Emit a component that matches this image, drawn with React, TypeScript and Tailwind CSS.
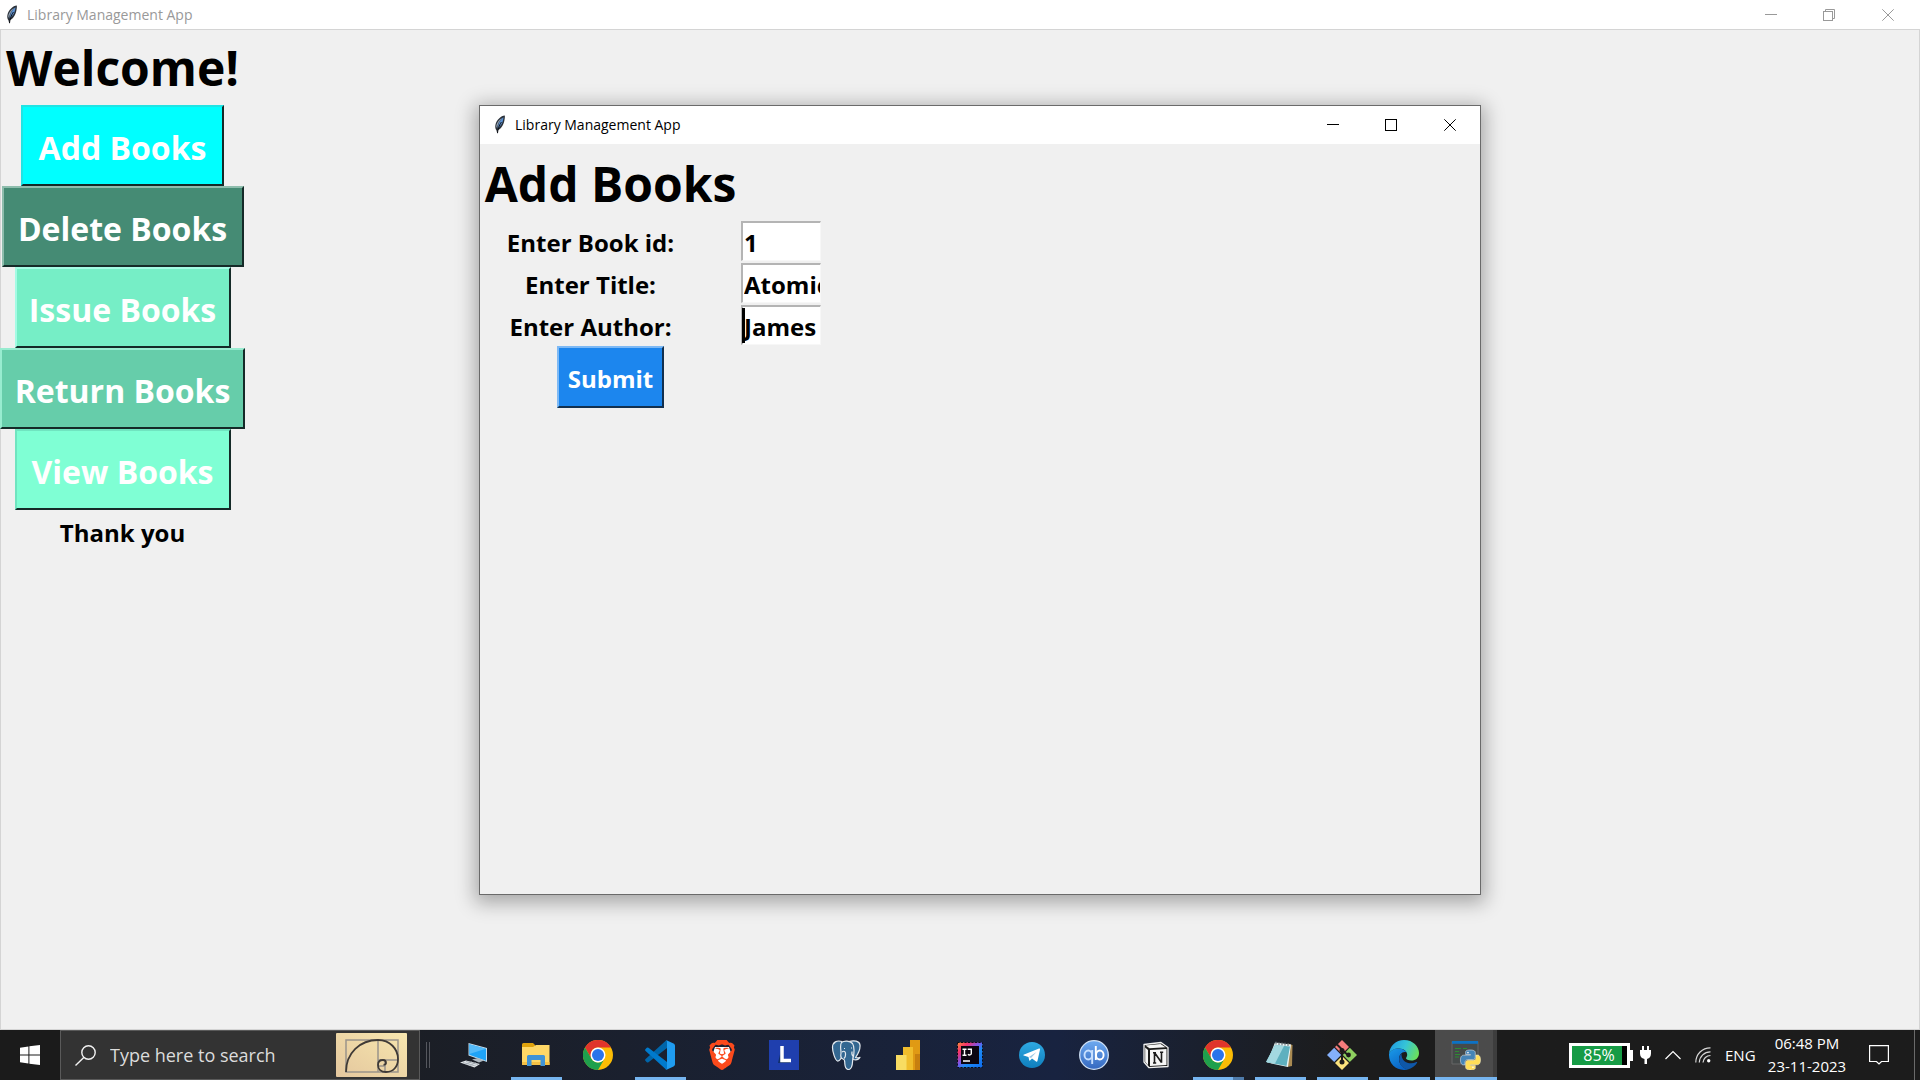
import React from "react";
import { SiBrave } from "react-icons/si";

const PY =
  "M14.25.18l.9.2.73.26.59.3.45.32.34.34.25.34.16.33.1.3.04.26.02.2-.01.13V8.5l-.05.63-.13.55-.21.46-.26.38-.3.31-.33.25-.35.19-.35.14-.33.1-.3.07-.26.04-.21.02H8.77l-.69.05-.59.14-.5.22-.41.27-.33.32-.27.35-.2.36-.15.37-.1.35-.07.32-.04.27-.02.21v3.06H3.17l-.21-.03-.28-.07-.32-.12-.35-.18-.36-.26-.36-.36-.35-.46-.32-.59-.28-.73-.21-.88-.14-1.05-.05-1.23.06-1.22.16-1.04.24-.87.32-.71.36-.57.4-.44.42-.33.42-.24.4-.16.36-.1.32-.05.24-.01h.16l.06.01h8.16v-.83H6.18l-.01-2.75-.02-.37.05-.34.11-.31.17-.28.25-.26.31-.23.38-.2.44-.18.51-.15.58-.12.64-.1.71-.06.77-.04.84-.02 1.27.05z";

function Feather() {
  return (
    <svg width="12" height="20" viewBox="0 0 12 20" className="shrink-0">
      <path d="M10.800.6C7 .8 2.500 5 1.400 10c-.4 2 0 4 1 5.200l1 3.800.7-4C7 14 9.500 10 10.400 5.500 10.800 3.500 11 2 10.800.6z" fill="#2a3038" />
      <path d="M9.500 2.200C6.500 4 4.300 8 3.600 13.400 6.600 11.500 9.300 7 9.500 2.200z" fill="#5a8fd0" />
      <path d="M8 3.200C5 4.500 2.600 8 2.200 11.500L3 13C3.600 9 5.500 5.500 8 3.200z" fill="#93a3b5" />
      <path d="M7.500 7C6 9 4.200 12 3.500 18" stroke="#0b0d12" fill="none" />
    </svg>
  );
}

const MinIcon = () => (
  <svg width="12" height="12" viewBox="0 0 12 12" stroke="currentColor"><path d="M0 5.500H12" /></svg>
);
const MaxIcon = () => (
  <svg width="12" height="12" viewBox="0 0 12 12" fill="none" stroke="currentColor"><rect x=".5" y=".5" width="11" height="11" /></svg>
);
const RestoreIcon = () => (
  <svg width="12" height="12" viewBox="0 0 12 12" fill="none" stroke="currentColor">
    <rect x=".5" y="2.500" width="9" height="9" />
    <path d="M2.500 2.500V.5H11.500V9.500H9.500" />
  </svg>
);
const CloseIcon = () => (
  <svg width="12" height="12" viewBox="0 0 12 12" fill="none" stroke="currentColor"><path d="M.3.3 11.700 11.700M11.700.3.3 11.700" /></svg>
);

function Controls({ restore = false }: { restore?: boolean }) {
  return (
    <div className="ml-auto flex self-stretch">
      <button aria-label="Minimize" className="grid w-[58px] place-items-center"><MinIcon /></button>
      <button aria-label="Maximize" className="grid w-[58px] place-items-center">{restore ? <RestoreIcon /> : <MaxIcon />}</button>
      <button aria-label="Close" className="grid w-[60px] place-items-center"><CloseIcon /></button>
    </div>
  );
}

const raised = "border-t-2 border-l-2 border-r-2 border-b-2 font-bold text-white";

const mainButtons = [
  { label: "Add Books", look: "w-[203px] bg-[#00ffff] border-t-[#20e4e4] border-l-[#20e4e4]" },
  { label: "Delete Books", look: "w-[242px] bg-[#458b74] border-t-[#8ebdad] border-l-[#8ebdad]" },
  { label: "Issue Books", look: "w-[216px] bg-[#76eec6] border-t-[#a4fbe4] border-l-[#a4fbe4]" },
  { label: "Return Books", look: "w-[245px] bg-[#66cdaa] border-t-[#98ecd0] border-l-[#98ecd0]" },
  { label: "View Books", look: "w-[216px] bg-[#7fffd4] border-t-[#70e4c0] border-l-[#70e4c0]" },
];

function Field({ id, label, value, caret = false }: { id: string; label: string; value: string; caret?: boolean }) {
  return (
    <div className="flex h-[42px] items-center">
      <label htmlFor={id} className="w-[261px] pt-1 pr-10 text-center text-[24px] leading-[34px] font-bold">{label}</label>
      <div className="relative w-20">
        <input
          id={id}
          defaultValue={value}
          className="block h-10 w-full border-t-2 border-r border-b border-l-2 border-t-[#b4b4b4] border-r-[#f7f7f7] border-b-[#f7f7f7] border-l-[#b4b4b4] bg-white pt-[2px] pl-px text-[24px] font-bold outline-none"
        />
        {caret && <span className="absolute top-[3px] left-px h-[35px] w-[3px] bg-black" />}
      </div>
    </div>
  );
}

function Chrome() {
  return (
    <svg width="30" height="30" viewBox="0 0 30 30">
      <circle cx="15" cy="15" r="15" fill="#fbbc05" />
      <path d="M2 7.500A15 15 0 0 1 28 7.500H15A7.500 7.500 0 0 0 8.500 11.250L8.500 18.750z" fill="#e0352b" />
      <path d="M2 7.500A15 15 0 0 0 15 30L21.500 18.750A7.500 7.500 0 0 1 8.500 18.750z" fill="#1fa04d" />
      <circle cx="15" cy="15" r="7.500" fill="#fff" />
      <circle cx="15" cy="15" r="6" fill="#2a74ea" />
    </svg>
  );
}
function Computer() {
  return (
    <svg width="30" height="30" viewBox="0 0 30 30">
      <path d="M9.500 3 28 8v14L9.500 15.500z" fill="#c8dbe8" />
      <path d="M10.300 4.200 27 8.700v12L10.300 14.800z" fill="#1fa3f6" />
      <path d="M10.300 4.200 27 8.700 10.300 14z" fill="#55baf8" />
      <path d="M13 19.500l6-1.500 6 2.500-5 2z" fill="#aeb8bf" />
      <path d="M1 22.500 7 20.500 21 24 15.500 27.500z" fill="#e3e7ea" />
      <path d="M4 22.500l13 3.700M7 21.500l12 3M7 24.500l6-3M11 25.500l6-3" stroke="#98a1a7" strokeWidth=".7" />
    </svg>
  );
}
function Folder() {
  return (
    <svg width="30" height="30" viewBox="0 0 30 30">
      <path d="M1 4.500a1.500 1.500 0 0 1 1.500-1.500H12l2 2V8H1z" fill="#e0a30c" />
      <path d="M1 7h11l3-2h13.500v20H1z" fill="#ffd866" />
      <path d="M1 22h27.500v3H1z" fill="#f4c045" />
      <path d="M6 26V16.500a1.500 1.500 0 0 1 1.500-1.500h15a1.500 1.500 0 0 1 1.500 1.500V26h-4.500v-6h-9v6z" fill="#3f93d6" />
    </svg>
  );
}
function Code() {
  return (
    <svg width="30" height="30" viewBox="0 0 30 30">
      <path d="M22 8 3.500 22.200a1.300 1.300 0 0 1-1.700 0L.6 21a1.300 1.300 0 0 1 0-1.900L21 .6 22 1z" fill="#0065a9" />
      <path d="M22 22 3.500 7.800a1.300 1.300 0 0 0-1.700 0L.6 9a1.300 1.300 0 0 0 0 1.900L21 29.400l1-.4z" fill="#007acc" />
      <path d="M21.500 29.700c-.7.300-1.300.2-1.800-.3.700.6 2.300.1 2.300-1.300V1.900c0-1.400-1.600-1.900-2.300-1.300.5-.5 1.100-.6 1.800-.3l7 3.300c.9.400 1.500 1.200 1.500 2.200v18.400c0 1-.6 1.800-1.500 2.200z" fill="#1f9cf0" />
    </svg>
  );
}
function Brave() {
  return (
    <div className="relative grid size-[30px] place-items-center">
      <svg width="20" height="22" viewBox="0 0 20 22" className="absolute"><path d="M3 3h14l2 6-3 8-6 5-6-5-3-8z" fill="#fff" /></svg>
      <SiBrave size={30} color="#fb4a1c" className="relative" />
    </div>
  );
}
function LSquare() {
  return (
    <div className="grid size-[30px] place-items-center bg-[#1f3fae]">
      <svg width="30" height="30" viewBox="0 0 30 30">
        <path d="M9 23l3-13v9h9v4z" fill="#12306b" />
        <path d="M13 6v14.500h9" stroke="#fff" strokeWidth="3.500" fill="none" />
      </svg>
    </div>
  );
}
function Postgres() {
  return (
    <svg width="30" height="30" viewBox="0 0 30 30" fill="#336791" stroke="#e4e9ee" strokeWidth="1.200" strokeLinejoin="round">
      <path d="M11 1.500C6 0 1.500 2 1.500 7.500c0 4 2.500 12.500 5 13.500 1.600.5 3-2 4-3.200z" />
      <path d="M18 1.500c5-1.500 10.500-.5 11 3.500.3 3.500-2 9-4.500 12.500 1.500.5 3.500.3 4.500-.2-1 2-4 3-7 2.200z" />
      <path d="M10.500 2.500C13 .5 19 .5 21.500 3.500c2.500 3.500 1.500 9 1 13-.8.800-.7 2-.9 4.500-.2 4.500-1.100 8.500-4.100 8.500s-3.500-3-3.700-6c-.1-3 .2-4-1.800-4.500-2.500-.7-2.500-3-2-5.500.3-3-1.500-8 .5-11z" />
      <path d="M11 12c2-1.500 3.500-.5 3.500 1.500 0 2.500.5 3-1.500 5M22.500 16.500c-1.500-1-2-2.500-1.500-5" fill="none" />
      <path d="M13 8.500h1M20 8h1" />
    </svg>
  );
}
function PowerBi() {
  return (
    <svg width="30" height="30" viewBox="0 0 30 30">
      <path d="M17 0h10v30H17z" fill="#e09a14" />
      <path d="M22 14h5v16h-5z" fill="#c77f0f" />
      <path d="M10 7h10v23H10z" fill="#f0bd2c" />
      <path d="M3 15h10.500v15H3z" fill="#f8dc62" />
    </svg>
  );
}
function IntelliJ() {
  return (
    <svg width="30" height="30" viewBox="0 0 30 30">
      <defs>
        <linearGradient id="ij" x1="0" y1="0" x2="1" y2="1">
          <stop offset="0" stopColor="#fc8f3c" /><stop offset=".22" stopColor="#f8316a" /><stop offset=".45" stopColor="#7a55e8" /><stop offset=".6" stopColor="#1d8cf5" /><stop offset="1" stopColor="#0f6cf0" />
        </linearGradient>
      </defs>
      <rect x="2.500" y="2.500" width="25" height="25" fill="url(#ij)" stroke="#0c0d14" strokeDasharray="2 1.500" />
      <rect x="6" y="6" width="18" height="18" fill="#0b0510" />
      <path d="M7.500 9.200h4M9.500 9.200v6M7.500 15.200h4M12.700 9.200h3.600v4.300c0 1.500-2.300 2-3.300.8M8 21h7" stroke="#fff" strokeWidth="1.400" fill="none" />
    </svg>
  );
}
function Telegram() {
  return (
    <svg width="30" height="30" viewBox="0 0 30 30">
      <defs><linearGradient id="tg" x1="0" y1="0" x2="0" y2="1"><stop offset="0" stopColor="#2fa9e2" /><stop offset="1" stopColor="#0f7fbd" /></linearGradient></defs>
      <circle cx="15" cy="15" r="13" fill="url(#tg)" />
      <path d="M6.500 14.800 22 8.500c.7-.3 1.200.1 1 1l-2.500 11.300c-.2.900-.7 1.100-1.400.7L15 18.500l-2 2c-.3.300-.7.200-.8-.3l-.7-3.200-4.900-1.500c-.4-.2-.4-.5-.1-.7z" fill="#fff" />
      <path d="M12 17l7.500-5-5.500 6z" fill="#9cc9e4" />
    </svg>
  );
}
function QBit() {
  return (
    <svg width="30" height="30" viewBox="0 0 30 30">
      <defs><linearGradient id="qb" x1="0" y1="0" x2="0" y2="1"><stop offset="0" stopColor="#6eaaf0" /><stop offset="1" stopColor="#3468c0" /></linearGradient></defs>
      <circle cx="15" cy="15" r="14.300" fill="url(#qb)" stroke="#cfe0f5" strokeWidth="1.300" />
      <g fill="none" strokeWidth="1.900">
        <g stroke="#c8e0ff"><ellipse cx="9.300" cy="15" rx="3.800" ry="4.500" /><path d="M13.200 10v14" /></g>
        <g stroke="#fff"><ellipse cx="20.800" cy="15" rx="3.800" ry="4.500" /><path d="M16.800 6v14" /></g>
      </g>
    </svg>
  );
}
function Notion() {
  return (
    <svg width="30" height="30" viewBox="0 0 30 30">
      <path d="M3 4.500 20 2.500 27 7.500V26.500L8 27.700 3 22z" fill="#1b1b1b" stroke="#f0f0f0" strokeWidth="1.300" strokeLinejoin="round" />
      <path d="M4.500 5.500 19.500 4 24.500 7.200 8.500 8.200z" fill="#f6f6f6" />
      <path d="M4.200 7.500 7 10v15.200L4.200 21.800z" fill="#f6f6f6" />
      <path d="M9 10 25.500 9v16L9 26z" fill="#f6f6f6" />
      <path d="M12 12.700h3M13.500 12.500v10.500M12 23h3.200M13.500 12.500 20.500 22.500M20.500 12.300v10.500M19 12.300h3.200" stroke="#1b1b1b" strokeWidth="1.600" fill="none" />
    </svg>
  );
}
function Notepad() {
  return (
    <svg width="30" height="30" viewBox="0 0 30 30">
      <path d="M23 3.500 27.500 5 27 26l-5 1z" fill="#a98a52" />
      <path d="M10 2.500 26 4.500 23 27 2 22.500z" fill="#e9f4f5" />
      <path d="M10 5 25 6.500 21.500 26 1 22z" fill="#5eb0bf" />
      <path d="M10 5 19 6 10 23.500 1 22z" fill="#a3d8e0" />
      <path d="M11 1.500v3M14 2v3M17 2.300v3M20 2.600v3M23 3v3" stroke="#596268" />
    </svg>
  );
}
function Git() {
  return (
    <svg width="30" height="30" viewBox="0 0 30 30">
      <path d="M15 0 22 7 15 14 8 7z" fill="#f57c7c" />
      <path d="M7.200 7.800 14.200 15 7.200 22 0 15z" fill="#84b0fb" />
      <path d="M22.800 7.800 30 15 22.800 22 15.800 15z" fill="#8fd060" />
      <path d="M15 16 22 23 15 30 8 23z" fill="#fbe27c" />
      <path d="M10 4.500 15 9.500V22M15 10l6.500 5.500" stroke="#1d1b1a" strokeWidth="2" fill="none" />
      <circle cx="15" cy="10.500" r="2.500" fill="#1d1b1a" /><circle cx="15" cy="22" r="2.500" fill="#1d1b1a" /><circle cx="21.500" cy="15" r="2.400" fill="#1d1b1a" />
    </svg>
  );
}
function Edge() {
  return (
    <svg width="30" height="30" viewBox="0 0 30 30">
      <defs>
        <linearGradient id="e1" x1="0" y1=".3" x2="1" y2=".6"><stop offset="0" stopColor="#1f9ce4" /><stop offset=".5" stopColor="#36c5d6" /><stop offset="1" stopColor="#6be05a" /></linearGradient>
        <linearGradient id="e2" x1="0" y1="0" x2=".6" y2="1"><stop offset="0" stopColor="#1a9be8" /><stop offset="1" stopColor="#0a62c4" /></linearGradient>
      </defs>
      <path d="M0 14C.5 6 7 0 15 0c9 0 15 6.500 15 13 0 5-3.500 7.500-7.500 7.500-3.500 0-5.500-1.200-5.500-2.200 0-.8 1.200-1.300 1.200-3.500 0-3.500-3.700-6.300-8.200-6.300C5.500 8.500 1.500 10.500 0 14z" fill="url(#e1)" />
      <path d="M0 14c1.500-3.700 5.500-5.700 10-5.500 3.500 0 6.500 1.700 7.700 4-3.700-1.700-7.700 1.500-7.700 6.500 0 6 5 10 9.500 10.300C9 32 0 25 0 15z" fill="url(#e2)" />
      <path d="M12.500 13.500C9 16.500 9.500 23 13.500 27c2 2 4.500 2.500 6 2.300 3.500-1 6.800-3.500 8.600-6.500.3-.6-.2-.9-.7-.7-6.400 3-15.400.4-14.900-8.600z" fill="#0f57a8" />
    </svg>
  );
}
function PythonApp() {
  return (
    <svg width="30" height="30" viewBox="0 0 30 30">
      <path d="M1 1.500h26V24H1z" fill="#454a4a" stroke="#666" />
      <path d="M1 1h26v2.800H1z" fill="#0d72c4" />
      <path d="M4 8.500h6M4 11.500h4M4 14.500h5M4 17h4M12 8.500h4" stroke="#2f8a33" />
      <g transform="translate(9.500 10) scale(.83)">
        <path d={PY} fill="#4584b6" stroke="#dfe8ee" strokeWidth=".7" />
        <path d={PY} transform="rotate(180 12 12)" fill="#ffde57" stroke="#f3ecc8" strokeWidth=".7" />
        <circle cx="9" cy="3.200" r="1" fill="#fff" /><circle cx="15" cy="20.800" r="1" fill="#fff" />
      </g>
    </svg>
  );
}

const apps: { name: string; icon: React.ReactNode; open?: boolean; many?: boolean; active?: boolean }[] = [
  { name: "This PC", icon: <Computer /> },
  { name: "File Explorer", icon: <Folder />, open: true },
  { name: "Chrome", icon: <Chrome /> },
  { name: "Visual Studio Code", icon: <Code />, open: true },
  { name: "Brave", icon: <Brave /> },
  { name: "L", icon: <LSquare /> },
  { name: "PostgreSQL", icon: <Postgres /> },
  { name: "Power BI", icon: <PowerBi /> },
  { name: "IntelliJ IDEA", icon: <IntelliJ /> },
  { name: "Telegram", icon: <Telegram /> },
  { name: "qBittorrent", icon: <QBit /> },
  { name: "Notion", icon: <Notion /> },
  { name: "Chrome window", icon: <Chrome />, open: true, many: true },
  { name: "Notepad", icon: <Notepad />, open: true },
  { name: "Git Bash", icon: <Git />, open: true },
  { name: "Edge", icon: <Edge />, open: true },
  { name: "Python", icon: <PythonApp />, active: true },
];

function Taskbar() {
  return (
    <footer className="flex h-[50px] shrink-0 bg-linear-to-r from-[#1c1c1c] from-10% via-[#182340] via-55% to-[#1c1c1c] to-70% text-white">
      <button aria-label="Start" className="grid w-[60px] shrink-0 place-items-center bg-[#1b1b1b]">
        <svg width="20" height="20" viewBox="0 0 20 20" fill="#fff">
          <path d="M0 2.700 8.400 1.500V9.500H0zM9.400 1.300 20 0V9.500H9.400zM0 10.500H8.400V18.500L0 17.300zM9.400 10.500H20V20L9.400 18.700z" />
        </svg>
      </button>
      <div className="flex w-[360px] shrink-0 items-center border border-[#5a5a5a] bg-[#333333] pr-3 pl-[14px]">
        <svg width="21" height="21" viewBox="0 0 21 21" fill="none" stroke="#f2f2f2" strokeWidth="1.400" className="shrink-0">
          <circle cx="13.500" cy="7.500" r="6.700" /><path d="M8.800 12.400.5 20.500" />
        </svg>
        <input aria-label="Search" placeholder="Type here to search" className="ml-[14px] w-0 grow bg-transparent text-[18px] outline-none placeholder:text-[#dcdcdc]" />
        <svg width="71" height="44" viewBox="0 0 71 44" className="shrink-0">
          <defs><linearGradient id="gold" x1="1" y1="0" x2="0" y2="1"><stop offset="0" stopColor="#f7e6ae" /><stop offset="1" stopColor="#e4c79e" /></linearGradient></defs>
          <rect width="71" height="44" rx="1" fill="url(#gold)" />
          <path d="M10 7H62V39H10zM42 7V39M42 27H62M49 27V39M42 33H49" fill="none" stroke="#9b948b" strokeWidth="1.500" />
          <path d="M10 39C10 20 24 7 42 7c12 0 20 9 20 19 0 8-5 13-12 13-5 0-8-3-8-7 0-3 2-5 5-5 2 0 3 1 3 3 0 1-1 2-2.500 1.500" fill="none" stroke="#3f3a36" strokeWidth="1.800" />
        </svg>
      </div>
      <div className="flex w-[23px] shrink-0 items-center gap-[2px] pl-[6px]">
        <span className="h-[26px] w-px bg-[#55575e]" />
        <span className="h-[26px] w-px bg-[#55575e]" />
      </div>
      <nav className="flex">
        {apps.map((a) => (
          <button
            key={a.name}
            aria-label={a.name}
            className={a.active ? "flex w-[62px] flex-col items-center bg-linear-to-r from-[#4b4b4b] from-93% to-[#3d3d3d] to-93%" : "flex w-[62px] flex-col items-center"}
          >
            <span className="grid h-[47px] place-items-center pt-[3px]">{a.icon}</span>
            {a.many && <span className="h-[3px] w-[51px] border-r-[11px] border-[#4f7cab] bg-[#76b5f0]" />}
            {a.open && !a.many && <span className="h-[3px] w-[51px] bg-[#76b5f0]" />}
            {a.active && <span className="h-[3px] w-full bg-[#76b5f0]" />}
          </button>
        ))}
      </nav>
      <div className="ml-auto flex items-center text-[15px] whitespace-nowrap">
        <div className="flex items-center">
          <div className="flex h-[25px] w-[61px] border-[3px] border-white bg-black">
            <span className="grid h-full w-[50px] place-items-center bg-[#169b45] pl-1 text-[16px] leading-none">85%</span>
          </div>
          <span className="h-[11px] w-[3px] bg-white" />
        </div>
        <svg width="11" height="18" viewBox="0 0 11 18" fill="#fff" className="ml-[7px]">
          <path d="M2 0h2v4h3V0h2v4h2v3.500c0 3-1.500 5-4 5.500V18H4.500v-5C1.500 12.500 0 10.500 0 7.500V4h2z" />
        </svg>
        <svg width="16" height="10" viewBox="0 0 16 10" fill="none" stroke="#fff" strokeWidth="1.200" className="ml-[14px]"><path d="M.5 9 8 1.500 15.500 9" /></svg>
        <svg width="16" height="16" viewBox="0 0 16 16" fill="none" stroke="#d8d8d8" strokeWidth="1.200" className="ml-[14px]">
          <path d="M.8 15.500A14.500 14.500 0 0 1 15.500.8M4.300 15.500A11 11 0 0 1 15.500 4.800M8 15.500A7.500 7.500 0 0 1 15.500 8.500" />
          <circle cx="13.700" cy="13.700" r="1.700" fill="#fff" stroke="none" />
        </svg>
        <span className="ml-[14px] w-[30px]">ENG</span>
        <div className="ml-3 w-[80px] text-center leading-[23px]">
          <div>06:48 PM</div>
          <div>23-11-2023</div>
        </div>
        <button aria-label="Notifications" className="ml-[22px]">
          <svg width="20" height="20" viewBox="0 0 20 20" fill="none" stroke="#fff" strokeWidth="1.200"><path d="M.6.6H19.400V16.500H12.500L10 19 7.500 16.500H.6z" /></svg>
        </button>
        <span className="mr-[5px] ml-[25px] h-[50px] w-px bg-[#6a6a6a]" />
      </div>
    </footer>
  );
}

export default function App() {
  return (
    <div className="relative flex min-h-screen flex-col bg-[#f0f0f0] font-['Open_Sans','Noto_Sans',sans-serif] text-black">
      <header className="flex h-[30px] shrink-0 items-center border-b border-[#d4d4d4] bg-white pr-[2px] pl-[6px] text-[14px] text-[#999999]">
        <Feather />
        <span className="ml-[9px]">Library Management App</span>
        <Controls restore />
      </header>

      <main className="flex grow flex-col items-start border-x border-b border-[#d4d4d4]">
        <div className="flex w-[243px] flex-col items-center">
          <h1 className="h-[75px] text-[48px] leading-[76px] font-bold">Welcome!</h1>
          {mainButtons.map((b) => (
            <button key={b.label} className={`${raised} h-[81px] shrink-0 border-r-[#152a28] border-b-[#152a28] pt-1 text-[32px] whitespace-nowrap ${b.look}`}>
              {b.label}
            </button>
          ))}
          <p className="pt-[6px] text-[24px] leading-[34px] font-bold">Thank you</p>
        </div>
      </main>

      <section
        aria-label="Add Books"
        className="absolute top-[105px] left-[479px] flex h-[790px] w-[1002px] flex-col border border-[#6a6a6a] bg-[#f0f0f0] shadow-[0_4px_18px_4px_rgba(0,0,0,0.3)]"
      >
        <header className="flex h-[38px] shrink-0 items-center bg-white pl-[14px] text-[14px]">
          <Feather />
          <span className="ml-[9px] pb-[2px]">Library Management App</span>
          <Controls />
        </header>
        <form className="flex flex-col items-start" onSubmit={(e) => e.preventDefault()}>
          <h2 className="h-[76px] w-[261px] text-center text-[48px] leading-[79px] font-bold whitespace-nowrap">Add Books</h2>
          <Field id="book-id" label="Enter Book id:" value="1" />
          <Field id="title" label="Enter Title:" value="Atomic" />
          <Field id="author" label="Enter Author:" value="James" caret />
          <div className="flex w-[261px] justify-center">
            <button className={`${raised} h-[62px] w-[107px] border-t-[#7db9f5] border-r-[#12304f] border-b-[#12304f] border-l-[#7db9f5] bg-[#1c86ee] pt-1 text-[24px]`}>
              Submit
            </button>
          </div>
        </form>
      </section>

      <Taskbar />
    </div>
  );
}
